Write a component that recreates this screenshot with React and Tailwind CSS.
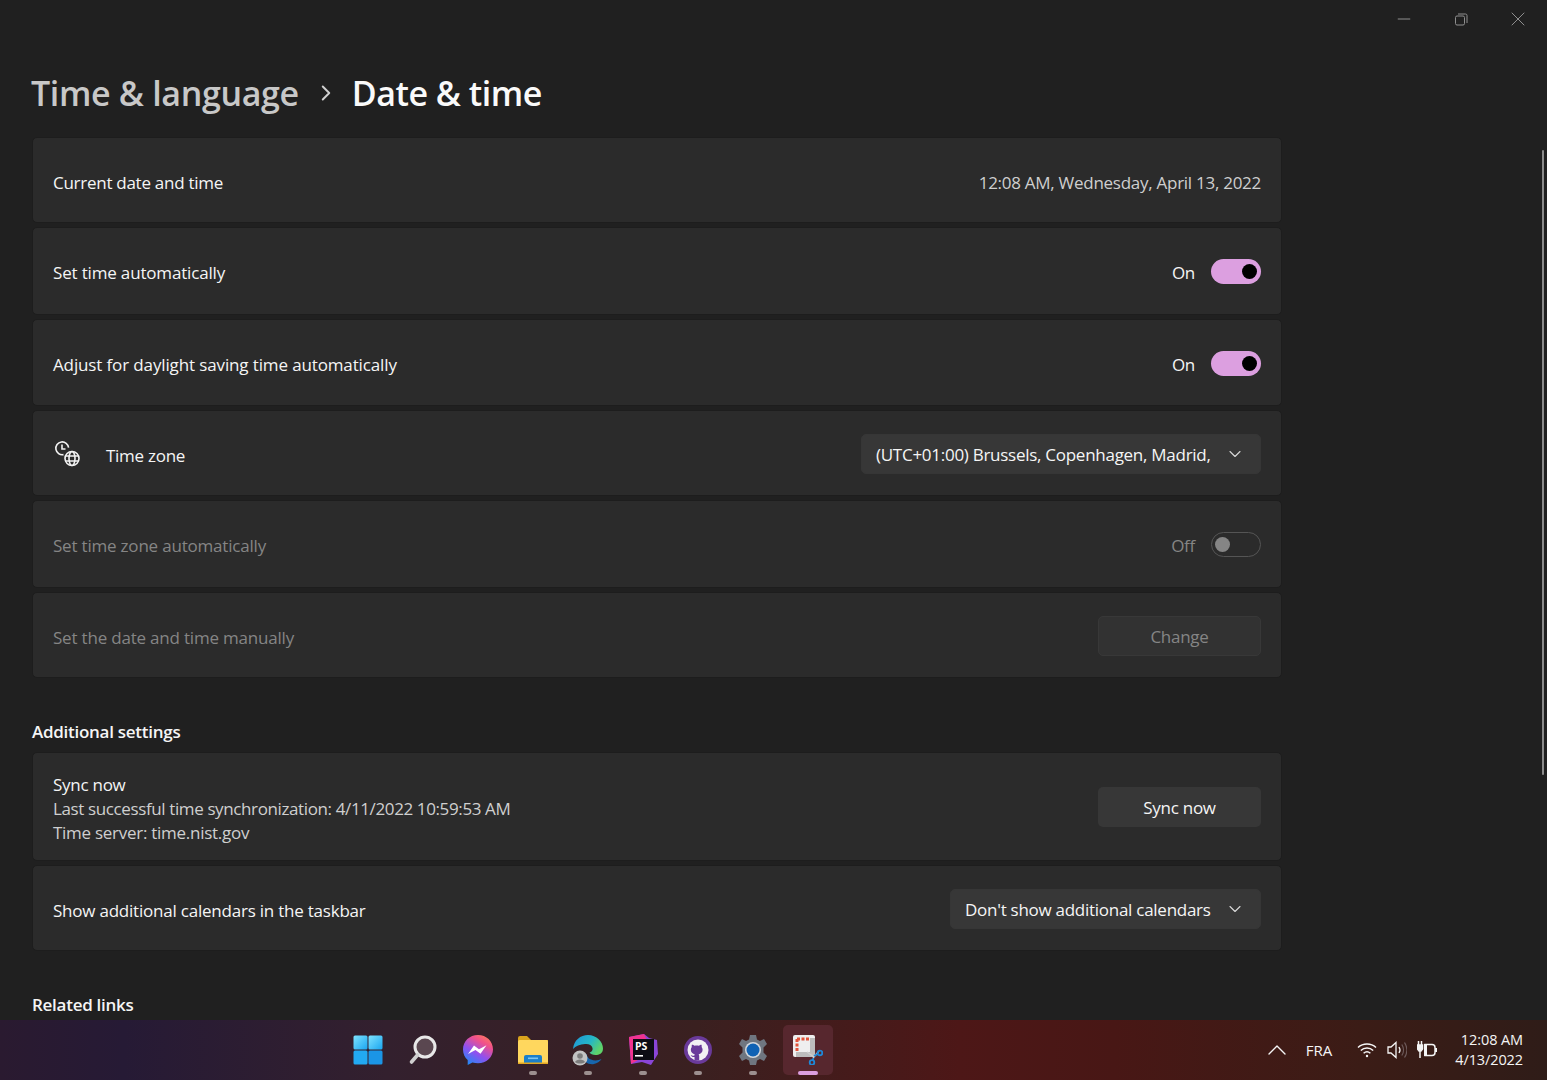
import { ChevronDown, ChevronRight, ChevronUp, Minus, X } from 'lucide-react'

const font = "font-['Open_Sans','Noto_Sans',sans-serif]"

function Card({ className = '', children }) {
  return (
    <div className={`flex items-center justify-between rounded-[5px] bg-[#2b2b2b] border border-[#1d1d1d] pl-[20px] pr-[20px] ${className}`}>
      {children}
    </div>
  )
}

function Toggle({ on }) {
  if (on) {
    return (
      <div className="flex h-[25px] w-[50px] items-center justify-end rounded-full bg-[#dc9fe0] pr-[4px]">
        <div className="h-[15px] w-[15px] rounded-full bg-black" />
      </div>
    )
  }
  return (
    <div className="flex h-[25px] w-[50px] items-center rounded-full border border-[#555555] pl-[3px]">
      <div className="h-[15px] w-[15px] rounded-full bg-[#858585]" />
    </div>
  )
}

function Label({ children, dim, className = '' }) {
  return (
    <span className={`text-[17px] leading-[24px] tracking-[-0.27px] ${dim ? 'text-[#858585]' : 'text-[#f5f5f5]'} ${className}`}>
      {children}
    </span>
  )
}

function Dropdown({ width, children }) {
  return (
    <div className={`flex h-[40px] items-center justify-between rounded-[5px] border border-[#363636] bg-[#373737] pl-[14px] pr-[15px] ${width}`}>
      <Label className="mt-[2px]">{children}</Label>
      <ChevronDown size={20} strokeWidth={1.3} className="text-[#d8d8d8]" />
    </div>
  )
}

function TimeZoneIcon() {
  return (
    <svg width="28" height="28" viewBox="0 0 28 28" fill="none" stroke="#f2f2f2" strokeWidth="1.6">
      <path d="M10.500 14.600A6.400 6.400 0 1 1 15.600 7.600" />
      <path d="M9 4.500V9H12.500" />
      <circle cx="19" cy="18.500" r="7" />
      <ellipse cx="19" cy="18.500" rx="3" ry="7" />
      <path d="M12.300 16H25.700M12.300 21H25.700" />
    </svg>
  )
}

function WinLogo() {
  return (
    <svg width="30" height="30" viewBox="0 0 30 30">
      <defs>
        <linearGradient id="w1" x1="0" y1="0" x2="1" y2="1">
          <stop offset="0" stopColor="#7fe3ff" />
          <stop offset="1" stopColor="#1aa6f0" />
        </linearGradient>
      </defs>
      <rect x="0.500" y="0.500" width="14" height="14" rx="1.500" fill="url(#w1)" />
      <rect x="15.500" y="0.500" width="14" height="14" rx="1.500" fill="url(#w1)" />
      <rect x="0.500" y="15.500" width="14" height="14" rx="1.500" fill="#22a9f2" />
      <rect x="15.500" y="15.500" width="14" height="14" rx="1.500" fill="#1b95e6" />
    </svg>
  )
}

function SearchIcon() {
  return (
    <svg width="30" height="32" viewBox="0 0 30 32" fill="none">
      <circle cx="17" cy="13" r="10" fill="#5a4750" stroke="#e8e8e8" strokeWidth="3" />
      <path d="M9.500 21L3.500 28" stroke="#cfcfcf" strokeWidth="3.600" strokeLinecap="round" />
    </svg>
  )
}

function MessengerIcon() {
  return (
    <svg width="32" height="32" viewBox="0 0 32 32">
      <defs>
        <linearGradient id="m1" x1="0.200" y1="1" x2="0.800" y2="0">
          <stop offset="0" stopColor="#1e8cf5" />
          <stop offset="0.400" stopColor="#8f50f0" />
          <stop offset="0.750" stopColor="#f0508c" />
          <stop offset="1" stopColor="#ff7a5c" />
        </linearGradient>
      </defs>
      <path d="M16 1C7.600 1 1 7.200 1 15.400c0 4.300 1.800 8 4.700 10.600V31l4.700-2.600c1.800.5 3.600.8 5.600.8 8.400 0 15-6.200 15-13.800C31 7.200 24.400 1 16 1z" fill="url(#m1)" />
      <path d="M6 20l6-8.500 5 3.700 7.500-4-6 8.500-5-3.700z" fill="#fff" />
    </svg>
  )
}

function FolderIcon() {
  return (
    <svg width="30" height="30" viewBox="0 0 30 30">
      <path d="M0 3a2 2 0 0 1 2-2h7l4 4h17v6H0z" fill="#d9a31d" />
      <rect x="0" y="5" width="30" height="24" rx="1.500" fill="#ffd75e" />
      <path d="M6 29v-7a2 2 0 0 1 2-2h14a2 2 0 0 1 2 2v7z" fill="#1b7fc9" />
      <rect x="10" y="22.500" width="10" height="1.600" fill="#7cc6f2" />
      <rect x="0" y="27.500" width="30" height="1.500" fill="#e3a820" />
    </svg>
  )
}

function EdgeIcon() {
  return (
    <svg width="32" height="32" viewBox="0 0 32 32">
      <defs>
        <linearGradient id="e1" x1="0" y1="0" x2="1" y2="0.500">
          <stop offset="0" stopColor="#1f93d8" />
          <stop offset="0.600" stopColor="#25b6c6" />
          <stop offset="1" stopColor="#5ed36a" />
        </linearGradient>
      </defs>
      <path d="M1 15C2 6 8.500 1 16 1c8.500 0 15 6.500 15 13.500 0 5-4 6.500-7.500 6.500-3 0-5-1-6-2.500 2-.5 3.500-2 3-4.500-.7-3-4-4.500-7.500-4C8 10.500 3.500 12 1 15z" fill="url(#e1)" />
      <path d="M9 22c2 6 8 9 13 8 3-.5 6-2.500 7.500-5-3 1.500-7 2-10.500.5-2.500-1-4-2.500-4.500-5.500z" fill="#1766ad" />
      <circle cx="8" cy="24" r="7.500" fill="#c3c3c3" />
      <circle cx="8" cy="22" r="2.800" fill="#7c7c7c" />
      <path d="M3 28c1-3.500 9-3.500 10 0-2.500 2-7.500 2-10 0z" fill="#7c7c7c" />
    </svg>
  )
}

function PhpStormIcon() {
  return (
    <svg width="32" height="32" viewBox="0 0 32 32">
      <path d="M2 3L17 0l5 4 8 2 1 14-7 11-9-3-11 2z" fill="#8a45d8" />
      <path d="M2 3L17 0l3 6-9 20-7 4z" fill="#f0338f" />
      <rect x="6" y="5" width="21" height="21" fill="#0c0c14" />
      <text x="8" y="16" fill="#fff" fontSize="10.500" fontWeight="700" fontFamily="'Open Sans',sans-serif">PS</text>
      <rect x="8" y="21" width="8" height="1.600" fill="#fff" />
    </svg>
  )
}

function GithubIcon() {
  return (
    <svg width="28" height="28" viewBox="0 0 28 28">
      <circle cx="14" cy="14" r="14" fill="#6a3a9a" />
      <circle cx="14" cy="14" r="10.500" fill="#f2f0f4" />
      <path d="M10.500 24.500v-3.500c-1.500.3-3-.2-3.800-2 1 .2 1.700 1 3.600.8 0-.7.200-1.200.5-1.500-2.200-.4-4-1.800-4-4.500 0-1.100.400-2 1-2.700-.2-.6-.2-1.500.1-2.400 1 0 2 .6 2.700 1 1.500-.4 2.700-.4 4.200 0 .7-.4 1.700-1 2.700-1 .3.900.3 1.800.1 2.400.6.700 1 1.600 1 2.700 0 2.700-1.800 4.100-4 4.500.4.400.6 1 .6 1.700v4.500z" fill="#6a3a9a" />
    </svg>
  )
}

function GearIcon() {
  return (
    <svg width="30" height="30" viewBox="0 0 30 30">
      <path d="M12 0h6l1 4.500 3 1.500 4-2 3 5-3.500 3.500v5L29 21l-3 5-4-2-3 1.500L18 30h-6l-1-4.500L8 24l-4 2-3-5 3.500-3.500v-5L1 9l3-5 4 2 3-1.500z" fill="#6f7680" />
      <circle cx="15" cy="15" r="8" fill="#d4d8dc" />
      <circle cx="15" cy="15" r="6.500" fill="#0f62b4" />
    </svg>
  )
}

function SnipIcon() {
  return (
    <svg width="30" height="30" viewBox="0 0 30 30" fill="none">
      <rect x="0" y="0" width="22" height="22" rx="2" fill="#efefef" />
      <path d="M17 3h5v17a2 2 0 0 1-2 2H3v-5h14z" fill="#bdbdbd" />
      <path d="M4 4h12M4 4v12" stroke="#e2533b" strokeWidth="3" strokeDasharray="3 1.500" />
      <path d="M14 17l7 5M26 16l-6 7" stroke="#cfcfcf" strokeWidth="1.500" />
      <circle cx="27" cy="18" r="2.300" stroke="#1e88d8" strokeWidth="1.800" />
      <circle cx="19" cy="27.500" r="2.300" stroke="#1e88d8" strokeWidth="1.800" />
      <path d="M21 21l4-2.200M20.500 23l-1 3" stroke="#1e88d8" strokeWidth="1.800" />
    </svg>
  )
}

function Wifi() {
  return (
    <svg width="20" height="16" viewBox="0 0 20 16" fill="none" stroke="#f5f5f5" strokeWidth="1.500">
      <path d="M1 5.500c5-4.600 13-4.600 18 0M3.800 8.500c3.500-3.200 8.900-3.200 12.400 0M6.600 11.300c2-1.800 4.800-1.800 6.800 0" />
      <circle cx="10" cy="14" r="1.200" fill="#f5f5f5" stroke="none" />
    </svg>
  )
}

function Volume() {
  return (
    <svg width="20" height="20" viewBox="0 0 20 20" fill="none" strokeWidth="1.300">
      <path d="M1 7h3l5-4.500v15L4 13H1z" stroke="#f5f5f5" />
      <path d="M12 7c1.200 1.800 1.200 4.200 0 6" stroke="#f5f5f5" />
      <path d="M14.800 4.500c2.200 3.200 2.200 7.800 0 11M17.500 2.500c3 4.500 3 10.500 0 15" stroke="#6d5a5a" />
    </svg>
  )
}

function Battery() {
  return (
    <svg width="20" height="18" viewBox="0 0 20 18" fill="none" stroke="#f5f5f5" strokeWidth="1.500">
      <path d="M8 3.500h7a3 3 0 0 1 3 3v5a3 3 0 0 1-3 3H8z" />
      <rect x="18" y="7" width="2" height="4" fill="#f5f5f5" stroke="none" />
      <rect x="7" y="3" width="3" height="12" fill="#f5f5f5" stroke="none" />
      <path d="M1.500 0v4M4.500 0v4" />
      <path d="M0.500 4h5v4l-1.500 2H2L0.500 8zM3 10v7" fill="#f5f5f5" />
    </svg>
  )
}

const dots = [
  { key: 'win', icon: <WinLogo /> },
  { key: 'search', icon: <SearchIcon /> },
  { key: 'msg', icon: <MessengerIcon /> },
  { key: 'folder', icon: <FolderIcon />, dot: true },
  { key: 'edge', icon: <EdgeIcon />, dot: true },
  { key: 'ps', icon: <PhpStormIcon />, dot: true },
  { key: 'gh', icon: <GithubIcon />, dot: true },
  { key: 'gear', icon: <GearIcon />, dot: true },
  { key: 'snip', icon: <SnipIcon />, active: true },
]

function Taskbar() {
  return (
    <div className="flex h-[60px] shrink-0 items-center justify-between bg-[linear-gradient(90deg,#2a1a30_0%,#261a35_8%,#33202e_25%,#3a2020_45%,#4d1717_62%,#481715_72%,#3b1c16_88%,#2f1c18_100%)] pl-[343px] pr-[24px]">
      <div className="flex items-center gap-[5px]">
        {dots.map(d => (
          <div
            key={d.key}
            className={`relative flex h-[50px] w-[50px] items-center justify-center rounded-[5px] ${d.active ? 'bg-[#57272e]' : ''}`}
          >
            {d.icon}
            {d.dot && <div className="absolute bottom-[0px] left-[21px] h-[4px] w-[8px] rounded-full bg-[#9c8f8f]" />}
            {d.active && <div className="absolute bottom-[0px] left-[15px] h-[4px] w-[20px] rounded-full bg-[#dc9fe0]" />}
          </div>
        ))}
      </div>
      <div className="flex items-center text-[#f5f5f5]">
        <ChevronUp size={32} strokeWidth={1} />
        <span className="ml-[13px] text-[15px]">FRA</span>
        <div className="ml-[25px] flex items-center gap-[10px]">
          <Wifi />
          <Volume />
          <Battery />
        </div>
        <div className="ml-[18px] flex flex-col items-end text-[14.5px] leading-[20px] tracking-[-0.1px]">
          <span>12:08 AM</span>
          <span>4/13/2022</span>
        </div>
      </div>
    </div>
  )
}

export default function App() {
  return (
    <div className={`relative flex h-[1080px] w-[1547px] flex-col overflow-hidden bg-[#202020] ${font}`}>
      {/* window controls */}
      <div className="absolute right-[1px] top-0 flex h-[38px] items-center text-[#8f8f8f]">
        <div className="flex w-[57px] justify-center"><Minus size={20} strokeWidth={1.2} /></div>
        <div className="flex w-[57px] justify-center pl-[2px]">
          <svg width="13" height="13" viewBox="0 0 13 13" fill="none" stroke="currentColor" strokeWidth="1">
            <rect x="0.500" y="3" width="9" height="9" rx="1.500" />
            <path d="M3 1h7.500A1.500 1.500 0 0 1 12 2.500V10" />
          </svg>
        </div>
        <div className="flex w-[57px] justify-center"><X size={24} strokeWidth={1} /></div>
      </div>
      <div className="absolute right-[3px] top-[150px] h-[625px] w-[2px] rounded-full bg-[#8c8c8c]" />

      <main className="flex-1 overflow-hidden pl-[32px] pt-[69px]">
        <div className="flex h-[48px] items-center text-[34px] font-semibold tracking-[-0.5px]">
          <span className="-ml-[1px] tracking-[-0.34px] text-[#c8c8c8]">Time &amp; language</span>
          <ChevronRight size={26} strokeWidth={1.8} className="ml-[14px] mr-[13px] text-[#d0d0d0]" />
          <span className="text-[#fafafa]">Date &amp; time</span>
        </div>

        <div className="mt-[20px] flex w-[1250px] flex-col gap-[4px]">
          <Card className="h-[86px] pt-[3px]">
            <Label className="mt-[3px]">Current date and time</Label>
            <Label className="mt-[3px] text-[#cfcfcf]!">12:08 AM, Wednesday, April 13, 2022</Label>
          </Card>
          <Card className="h-[88px] pt-[1px]">
            <Label className="mt-[3px] tracking-[-0.17px]!">Set time automatically</Label>
            <div className="flex items-center gap-[16px]"><Label className="mt-[3px]">On</Label><Toggle on /></div>
          </Card>
          <Card className="h-[87px] pt-[2px]">
            <Label className="mt-[3px] tracking-[-0.13px]!">Adjust for daylight saving time automatically</Label>
            <div className="flex items-center gap-[16px]"><Label className="mt-[3px]">On</Label><Toggle on /></div>
          </Card>
          <Card className="h-[86px] pt-[2px]">
            <div className="flex items-center gap-[25px]">
              <TimeZoneIcon />
              <Label className="mt-[3px]">Time zone</Label>
            </div>
            <Dropdown width="w-[400px]">(UTC+01:00) Brussels, Copenhagen, Madrid,</Dropdown>
          </Card>
          <Card className="h-[88px] pt-[1px]">
            <Label dim className="mt-[3px] tracking-[-0.2px]!">Set time zone automatically</Label>
            <div className="flex items-center gap-[16px]"><Label dim className="mt-[3px]">Off</Label><Toggle /></div>
          </Card>
          <Card className="h-[86px] pt-[2px]">
            <Label dim className="mt-[3px] tracking-[-0.2px]!">Set the date and time manually</Label>
            <div className="flex h-[40px] w-[163px] items-center justify-center rounded-[5px] bg-[#323232] border border-[#383838]">
              <Label dim className="mt-[2px]">Change</Label>
            </div>
          </Card>
        </div>

        <h2 className="mt-[42px] text-[17px] font-semibold leading-[24px] tracking-[-0.27px] text-[#f5f5f5]">Additional settings</h2>

        <div className="mt-[8px] flex w-[1250px] flex-col gap-[4px]">
          <Card className="h-[109px] pt-[1px]">
            <div className="mt-[4px] flex flex-col">
              <Label>Sync now</Label>
              <Label className="tracking-[-0.38px]! text-[#cfcfcf]!">Last successful time synchronization: 4/11/2022 10:59:53 AM</Label>
              <Label className="text-[#cfcfcf]!">Time server: time.nist.gov</Label>
            </div>
            <div className="flex h-[40px] w-[163px] items-center justify-center rounded-[5px] bg-[#373737]">
              <Label className="mt-[2px]">Sync now</Label>
            </div>
          </Card>
          <Card className="h-[86px] pt-[2px]">
            <Label className="mt-[3px] tracking-[-0.22px]!">Show additional calendars in the taskbar</Label>
            <Dropdown width="w-[311px]">Don't show additional calendars</Dropdown>
          </Card>
        </div>

        <h2 className="mt-[42px] text-[17px] font-semibold leading-[24px] tracking-[-0.27px] text-[#f5f5f5]">Related links</h2>
      </main>

      <Taskbar />
    </div>
  )
}
